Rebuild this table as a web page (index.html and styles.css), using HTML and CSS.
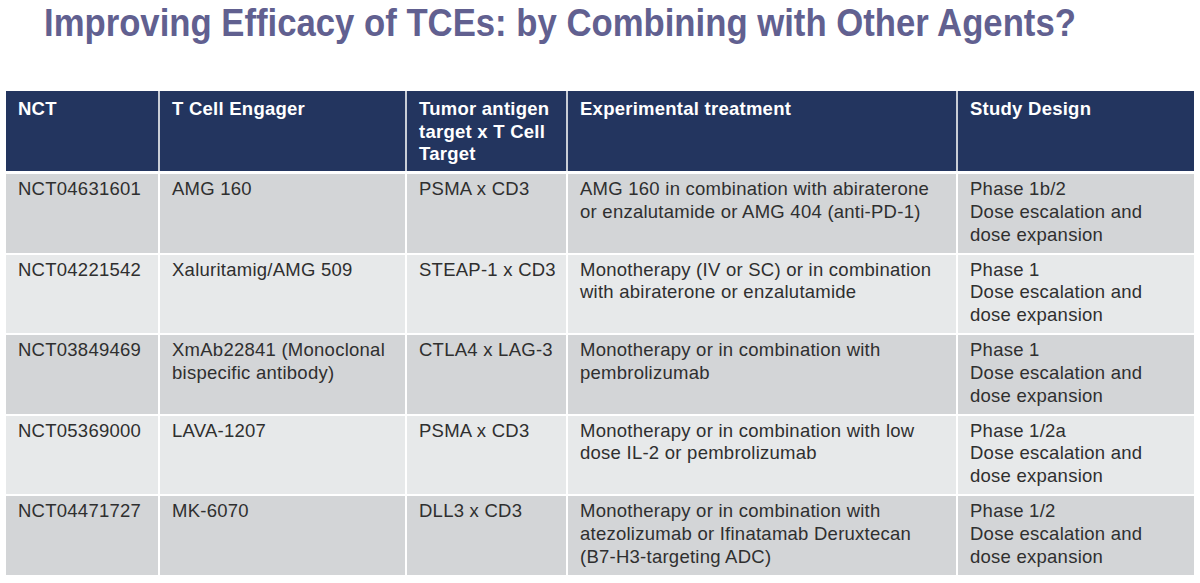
FILE: index.html
```html
<!DOCTYPE html>
<html lang="en">
<head>
<meta charset="utf-8">
<title>Improving Efficacy of TCEs</title>
<link rel="stylesheet" href="styles.css">
</head>
<body>
<div class="slide">
  <h1 class="title">Improving Efficacy of TCEs: by Combining with Other Agents?</h1>
  <table class="trials">
    <colgroup>
      <col class="c-nct">
      <col class="c-tce">
      <col class="c-target">
      <col class="c-treat">
      <col class="c-design">
    </colgroup>
    <thead>
      <tr>
        <th>NCT</th>
        <th>T Cell Engager</th>
        <th>Tumor antigen target x T Cell Target</th>
        <th>Experimental treatment</th>
        <th>Study Design</th>
      </tr>
    </thead>
    <tbody>
      <tr class="dark">
        <td>NCT04631601</td>
        <td>AMG 160</td>
        <td>PSMA x CD3</td>
        <td>AMG 160 in combination with abiraterone or enzalutamide or AMG 404 (anti-PD-1)</td>
        <td>Phase 1b/2<br>Dose escalation and dose expansion</td>
      </tr>
      <tr class="light">
        <td>NCT04221542</td>
        <td>Xaluritamig/AMG 509</td>
        <td>STEAP-1 x CD3</td>
        <td>Monotherapy (IV or SC) or in combination with abiraterone or enzalutamide</td>
        <td>Phase 1<br>Dose escalation and dose expansion</td>
      </tr>
      <tr class="dark">
        <td>NCT03849469</td>
        <td>XmAb22841 (Monoclonal bispecific antibody)</td>
        <td>CTLA4 x LAG-3</td>
        <td>Monotherapy or in combination with pembrolizumab</td>
        <td>Phase 1<br>Dose escalation and dose expansion</td>
      </tr>
      <tr class="light">
        <td>NCT05369000</td>
        <td>LAVA-1207</td>
        <td>PSMA x CD3</td>
        <td>Monotherapy or in combination with low dose IL-2 or pembrolizumab</td>
        <td>Phase 1/2a<br>Dose escalation and dose expansion</td>
      </tr>
      <tr class="dark">
        <td>NCT04471727</td>
        <td>MK-6070</td>
        <td>DLL3 x CD3</td>
        <td>Monotherapy or in combination with atezolizumab or Ifinatamab Deruxtecan (B7-H3-targeting ADC)</td>
        <td>Phase 1/2<br>Dose escalation and dose expansion</td>
      </tr>
    </tbody>
  </table>
</div>
</body>
</html>
```
FILE: styles.css
```css
html, body {
  margin: 0;
  padding: 0;
  background: #ffffff;
}

.slide {
  width: 1200px;
  height: 583px;
  overflow: hidden;
  font-family: "Liberation Sans", Arial, sans-serif;
}

.title {
  margin: 0;
  padding: 0 0 0 44px;
  height: 91px;
  font-size: 38px;
  line-height: 46px;
  font-weight: bold;
  color: #616090;
  white-space: nowrap;
  transform: scaleX(0.913);
  transform-origin: 44px 0;
}

.trials {
  margin-left: 6px;
  width: 1188px;
  table-layout: fixed;
  border-collapse: collapse;
  font-size: 18.5px;
  letter-spacing: 0.25px;
  line-height: 22.7px;
}

.c-nct { width: 153px; }
.c-tce { width: 247px; }
.c-target { width: 161px; }
.c-treat { width: 390px; }
.c-design { width: 237px; }

.trials th,
.trials td {
  text-align: left;
  vertical-align: top;
  padding: 4px 6px 5px 12px;
  border: 2px solid #ffffff;
}

.trials th:last-child,
.trials td:last-child {
  padding-right: 18px;
}

.trials th {
  background: #23355f;
  color: #ffffff;
  font-weight: bold;
  padding-top: 7px;
  height: 66px;
  border-top: none;
  border-bottom-width: 3px;
  border-left-color: #c9cdd6;
  border-right-color: #c9cdd6;
}

.trials th:first-child { border-left: none; }
.trials th:last-child { border-right: none; }
.trials td:first-child { border-left: none; }
.trials td:last-child { border-right: none; }

.trials td {
  color: #2f2f2f;
  height: 69.5px;
}

.trials tr.dark td { background: #d3d5d7; }
.trials tr.light td { background: #e7e9ea; }
```
